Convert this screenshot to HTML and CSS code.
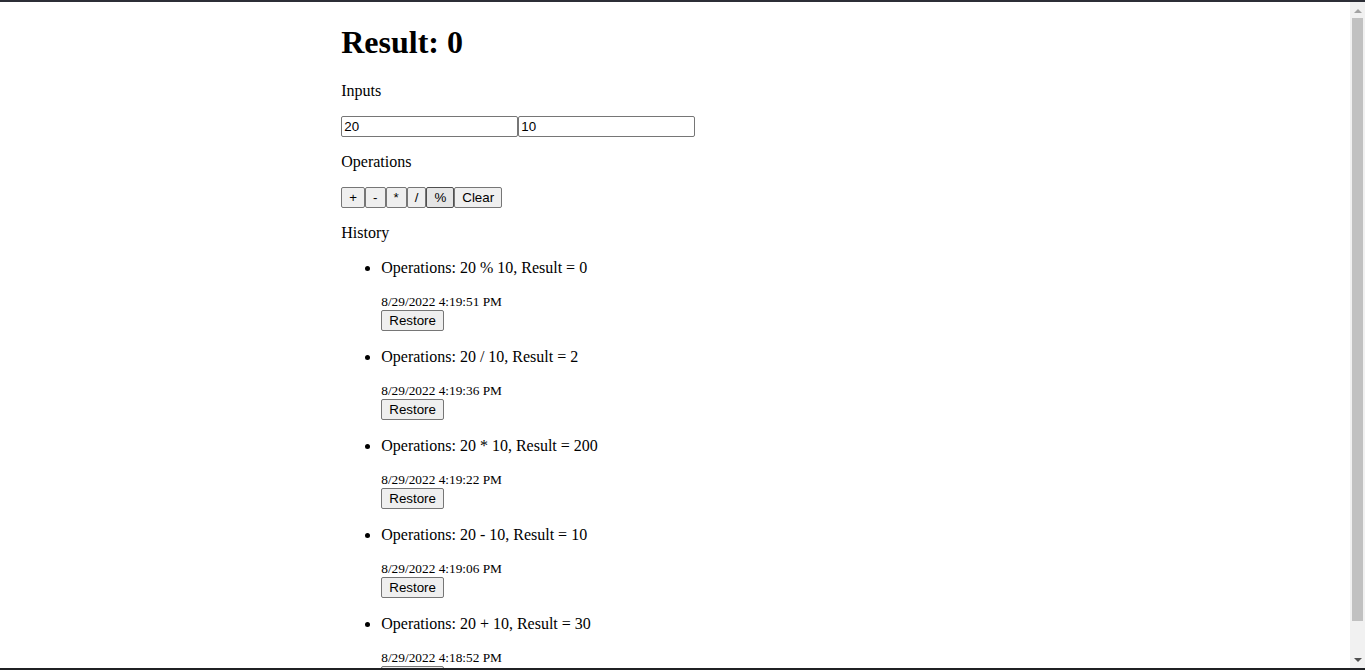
FILE: index.html
```html
<!DOCTYPE html>
<html lang="en">
<head>
<meta charset="utf-8">
<title>Calculator</title>
<link rel="stylesheet" href="styles.css">
</head>
<body>
<div class="frame-top"></div>
<div class="app">
  <h1 class="result">Result: 0</h1>
  <p>Inputs</p>
  <div class="inputs">
    <input class="field" type="text" value="20"><input class="field" type="text" value="10">
  </div>
  <p>Operations</p>
  <div class="ops"><button class="btn">+</button><button class="btn">-</button><button class="btn">*</button><button class="btn">/</button><button class="btn btn-hover">%</button><button class="btn">Clear</button></div>
  <p>History</p>
  <ul class="history">
    <li>
      <p>Operations: 20 % 10, Result = 0</p>
      <small class="date">8/29/2022 4:19:51 PM</small><br>
      <button class="btn">Restore</button>
    </li>
    <li>
      <p>Operations: 20 / 10, Result = 2</p>
      <small class="date">8/29/2022 4:19:36 PM</small><br>
      <button class="btn">Restore</button>
    </li>
    <li>
      <p>Operations: 20 * 10, Result = 200</p>
      <small class="date">8/29/2022 4:19:22 PM</small><br>
      <button class="btn">Restore</button>
    </li>
    <li>
      <p>Operations: 20 - 10, Result = 10</p>
      <small class="date">8/29/2022 4:19:06 PM</small><br>
      <button class="btn">Restore</button>
    </li>
    <li>
      <p>Operations: 20 + 10, Result = 30</p>
      <small class="date">8/29/2022 4:18:52 PM</small><br>
      <button class="btn">Restore</button>
    </li>
  </ul>
</div>
<div class="scrollbar">
  <div class="sb-btn"><span class="arrow-up"></span></div>
  <div class="sb-track"><div class="sb-thumb"></div></div>
  <div class="sb-btn"><span class="arrow-down"></span></div>
</div>
<div class="frame-bottom"></div>
</body>
</html>
```

FILE: styles.css
```css
html {
  overflow: hidden;
  height: 100%;
}
body {
  margin: 0 24px 8px 8px;
  font-family: "Liberation Serif", "Times New Roman", serif;
  font-size: 16px;
  color: #000;
  background: #fff;
}
.app {
  width: 50%;
  margin: 0 auto;
}
.result {
  font-size: 32px;
  margin: 23.5px 0 21.44px;
}
p {
  margin: 16px 0;
}
.field {
  box-sizing: border-box;
  width: 177px;
  height: 21px;
  margin: 0;
  padding: 1px 2px;
  border: 1px solid #767676;
  border-radius: 2px;
  font-family: "Liberation Sans", Arial, sans-serif;
  font-size: 13.333px;
  color: #000;
  background: #fff;
  vertical-align: top;
}
.btn {
  box-sizing: border-box;
  height: 21px;
  margin: 0;
  padding: 1px 7px;
  border: 1px solid #767676;
  border-radius: 2px;
  background: #efefef;
  color: #000;
  font-family: "Liberation Sans", Arial, sans-serif;
  font-size: 13.333px;
  line-height: normal;
}
.btn-hover {
  background: #e5e5e5;
  border-color: #4f4f4f;
}
.ops {
  display: flex;
}
.history {
  margin: 16px 0;
  padding-left: 40px;
}
.history li p {
  margin: 17px 0 15px;
}
.date {
  font-size: 13.333px;
}
.frame-top {
  position: fixed;
  top: 0;
  left: 0;
  right: 0;
  height: 2px;
  background: #2c2e36;
  z-index: 5;
}
.frame-bottom {
  position: fixed;
  bottom: 0;
  left: 0;
  right: 0;
  height: 2px;
  background: #202124;
  z-index: 5;
}
.scrollbar {
  position: fixed;
  top: 0;
  right: 0;
  bottom: 0;
  width: 15px;
  background: #f1f1f1;
  display: flex;
  flex-direction: column;
}
.sb-btn {
  height: 17px;
  display: flex;
  align-items: center;
  justify-content: center;
  flex: none;
}
.arrow-up {
  width: 0;
  height: 0;
  border-left: 4px solid transparent;
  border-right: 4px solid transparent;
  border-bottom: 4px solid #a3a3a3;
  margin-top: 4px;
}
.arrow-down {
  width: 0;
  height: 0;
  border-left: 4px solid transparent;
  border-right: 4px solid transparent;
  border-top: 4px solid #505050;
  margin-top: -3px;
}
.sb-track {
  flex: 1;
  padding: 1px 2px 0;
}
.sb-thumb {
  height: 603px;
  background: #c1c1c1;
}
```
